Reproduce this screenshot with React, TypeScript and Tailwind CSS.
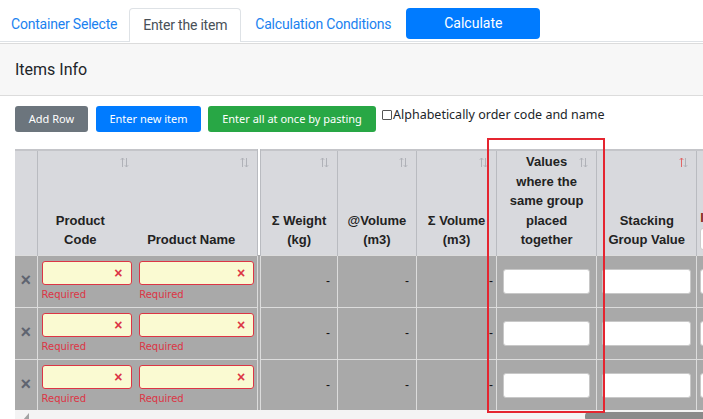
import { type FC } from "react";

const SortIcon: FC<{ active?: boolean }> = ({ active }) => (
  <svg width="9" height="11" viewBox="0 0 9 11" className="absolute right-[8px] top-[6px]">
    <path d="M2.5 10V1M0.8 2.8L2.5 1l1.7 1.8" fill="none" stroke={active ? "#e06666" : "#b0b2b8"} strokeWidth="1" />
    <path d="M6.5 1v9M4.8 8.2L6.5 10l1.7-1.8" fill="none" stroke="#b0b2b8" strokeWidth="1" />
  </svg>
);

const RequiredInput: FC<{ w: string }> = ({ w }) => (
  <div className={w}>
    <div className="relative h-[24px] rounded-[3px] border border-[#dc3545] bg-[#fafad2]">
      <span className="absolute right-[8px] top-[3px] text-[14px] font-bold leading-[16px] text-[#dc3545]">×</span>
    </div>
    <div className="mt-[4px] text-[10px] leading-[12px] text-[#dc3545]" style={{ fontFamily: "'DejaVu Sans', sans-serif" }}>
      Required
    </div>
  </div>
);

const th = "relative border-r border-[#b9bbc0] align-bottom px-1 pb-[5px] text-center font-bold text-[13px] leading-[19.5px] text-[#222]";
const td = "border-r border-b border-[#dcdcdc] align-middle";

export default function App() {
  const rows = [0, 1, 2];
  return (
    <div className="w-[703px] h-[419px] overflow-hidden bg-white text-[#212529]" style={{ fontFamily: "Roboto, 'Liberation Sans', sans-serif" }}>
      {/* tabs */}
      <div className="flex items-end h-[42px] border-b border-[#dee2e6]">
        <div className="px-[11px] h-[33px] flex items-center text-[14px] text-[#1a82f0] tracking-[-0.2px]">Container Selecte</div>
        <div className="ml-[1px] -mb-px px-[13px] h-[34px] flex items-center rounded-t-[4px] border border-b-0 border-[#dee2e6] bg-white text-[14px] text-[#495057] tracking-[-0.2px]">
          Enter the item
        </div>
        <div className="px-[14px] h-[33px] flex items-center text-[14px] text-[#1a82f0] tracking-[-0.2px]">Calculation Conditions</div>
        <button className="ml-[1px] mb-[2px] w-[134px] h-[31px] rounded-[4px] bg-[#007bff] text-[14px] text-white">Calculate</button>
      </div>

      {/* card header */}
      <div className="mt-[1px] h-[53px] flex items-center px-[15px] bg-[#f7f7f7] border-y border-[#dcdcdc] text-[16px] text-[#212529]">
        Items Info
      </div>

      {/* toolbar */}
      <div className="flex items-start gap-[7px] px-[15px] pt-[10px] h-[53px]" style={{ fontFamily: "'Noto Sans', 'Liberation Sans', sans-serif" }}>
        <button className="w-[73px] h-[26px] rounded-[3px] bg-[#6c757d] text-[11px] text-white">Add Row</button>
        <button className="ml-[1px] w-[105px] h-[26px] rounded-[3px] bg-[#007bff] text-[11px] text-white">Enter new item</button>
        <button className="w-[168px] h-[26px] rounded-[3px] bg-[#28a745] text-[11px] text-white">Enter all at once by pasting</button>
        <label className="-ml-[1px] flex items-center text-[12.5px] leading-[18px] text-[#212529]">
          <span className="mr-[1px] inline-block w-[10px] h-[10px] border border-[#555] rounded-[1px] bg-white" />
          Alphabetically order code and name
        </label>
      </div>

      {/* table */}
      <div className="relative ml-[15px] w-[688px] h-[271px]">
        <div className="overflow-hidden w-[688px] h-[261px]">
          <table className="table-fixed border-collapse w-[800px]" style={{ fontFamily: "'Liberation Sans', Arial, sans-serif" }}>
            <colgroup>
              <col className="w-[22px]" />
              <col className="w-[100px]" />
              <col className="w-[122px]" />
              <col className="w-[78px]" />
              <col className="w-[79px]" />
              <col className="w-[80px]" />
              <col className="w-[100px]" />
              <col className="w-[100px]" />
              <col className="w-[118px]" />
            </colgroup>
            <thead>
              <tr className="h-[105px] bg-[#d8d9dd] border-t-2 border-[#c4c5c9]">
                <th className={th} />
                <th className="relative align-bottom pb-[5px] pr-[14px] text-center font-bold text-[13px] leading-[19.5px] text-[#222]">
                  <SortIcon />
                  Product
                  <br />
                  Code
                </th>
                <th className="relative border-r-4 border-double border-[#b9bbc0] align-bottom pb-[5px] pr-[12px] text-center font-bold text-[13px] leading-[19.5px] text-[#222]">
                  <SortIcon />
                  Product Name
                </th>
                <th className={th}>
                  <SortIcon />
                  Σ Weight
                  <br />
                  (kg)
                </th>
                <th className={th}>
                  <SortIcon />
                  @Volume
                  <br />
                  (m3)
                </th>
                <th className={th}>
                  <SortIcon />
                  Σ Volume
                  <br />
                  (m3)
                </th>
                <th className={th}>
                  <SortIcon />
                  Values
                  <br />
                  where the
                  <br />
                  same group
                  <br />
                  placed
                  <br />
                  together
                </th>
                <th className={th}>
                  <SortIcon active />
                  Stacking
                  <br />
                  Group Value
                </th>
                <th className="relative align-bottom pb-[5px] px-[3px] text-left">
                  <div className="text-[13px] font-bold leading-[19.5px] text-[#8b2a1e]">I</div>
                  <div className="h-[22px] rounded-[3px] border border-[#ccc] bg-white" />
                </th>
              </tr>
            </thead>
            <tbody>
              {rows.map(r => (
                <tr key={r} className="h-[52px] bg-[#a9a9a9] border-t border-[#dcdcdc]">
                  <td className={`${td} text-center`}>
                    <span className="text-[18px] font-bold leading-[18px] text-[#5f6470]">×</span>
                  </td>
                  <td className="border-b border-[#dcdcdc] align-top pt-[5px] pl-[4px]">
                    <RequiredInput w="w-[90px]" />
                  </td>
                  <td className="border-b border-r-4 border-double border-[#dcdcdc] align-top pt-[5px] pl-[2px]">
                    <RequiredInput w="w-[115px]" />
                  </td>
                  <td className={`${td} text-right pr-[7px] text-[12px] text-[#111]`}>-</td>
                  <td className={`${td} text-right pr-[7px] text-[12px] text-[#111]`}>-</td>
                  <td className={`${td} text-right pr-[3px] text-[12px] text-[#111]`}>-</td>
                  <td className={`${td} px-[6px]`}>
                    <div className="h-[25px] rounded-[3px] border border-[#c8c8c8] bg-white" />
                  </td>
                  <td className={`${td} px-[5px]`}>
                    <div className="h-[25px] rounded-[3px] border border-[#c8c8c8] bg-white" />
                  </td>
                  <td className="border-b border-[#dcdcdc] px-[3px]">
                    <div className="h-[25px] rounded-[3px] border border-[#c8c8c8] bg-white" />
                  </td>
                </tr>
              ))}
            </tbody>
          </table>
        </div>
        {/* horizontal scrollbar */}
        <div className="relative h-[10px] bg-[#f4f4f4]">
          <svg width="8" height="8" viewBox="0 0 8 8" className="absolute left-[8px] top-[2px]">
            <path d="M6 1v7H0z" fill="#a3a3a3" />
          </svg>
          <div className="absolute left-[570px] top-[2px] w-[130px] h-[9px] rounded-[4px] bg-[#8a8a8a]" />
        </div>

        {/* annotation box */}
        <div className="absolute left-[472px] top-[-11px] w-[118px] h-[275px] border-2 border-[#e52530] pointer-events-none" />
      </div>
    </div>
  );
}
